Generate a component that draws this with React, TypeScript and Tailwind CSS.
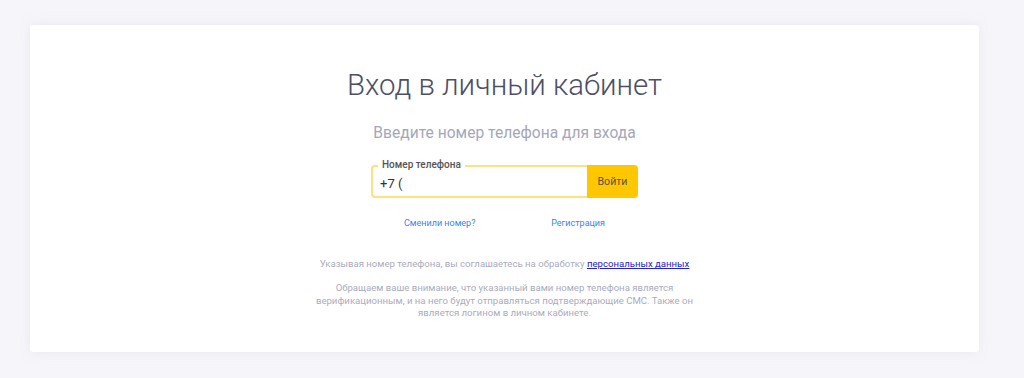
export default function App() {
  return (
    <div
      className="min-h-[378px] bg-[#f6f6fa] pl-[30px] pr-[45px] pt-[25px] pb-[26px]"
      style={{ fontFamily: "Roboto, 'Liberation Sans', sans-serif" }}
    >
      <div className="flex h-[327px] flex-col items-center rounded-[3px] bg-white pt-[42px] shadow-[0_0_12px_rgba(200,200,220,0.35)]">
        <h1 className="text-[29.4px] leading-[36px] font-light text-[#4d4f66]">
          Вход в личный кабинет
        </h1>
        <p className="mt-[20px] text-[15.6px] leading-[20px] text-[#a4a7ba]">
          Введите номер телефона для входа
        </p>

        {/* Phone form */}
        <div className="mt-[22px] flex h-[33px] w-[267px]">
          <div className="relative flex flex-1 items-center rounded-l-[4px] border-2 border-r-0 border-[#ffe083] pl-[7px]">
            <span className="absolute -top-[8px] left-[5px] bg-white px-[4px] text-[10px] leading-[12px] font-medium text-[#555]">
              Номер телефона
            </span>
            <span className="pt-[4px] text-[13px] text-[#333]">+7 (</span>
          </div>
          <button className="flex w-[51px] items-center justify-center rounded-r-[4px] bg-[#ffc700] text-[10.6px] text-[#5b5440]">
            Войти
          </button>
        </div>

        <div className="mt-[18px] flex w-[267px] justify-between px-[33px] text-[9px] leading-[14px] text-[#3f83ec]">
          <a href="#">Сменили номер?</a>
          <a href="#">Регистрация</a>
        </div>

        <p className="mt-[27px] text-[9.6px] leading-[14px] text-[#aaacbd]">
          Указывая номер телефона, вы соглашаетесь на обработку{" "}
          <a href="#" className="text-[#2222dd] underline">
            персональных данных
          </a>
        </p>
        <p className="mt-[11px] max-w-[385px] text-center text-[9.6px] leading-[12.5px] text-[#aaacbd]">
          Обращаем ваше внимание, что указанный вами номер телефона является
          верификационным, и на него будут отправляться подтверждающие СМС. Также он
          является логином в личном кабинете.
        </p>
      </div>
    </div>
  );
}
